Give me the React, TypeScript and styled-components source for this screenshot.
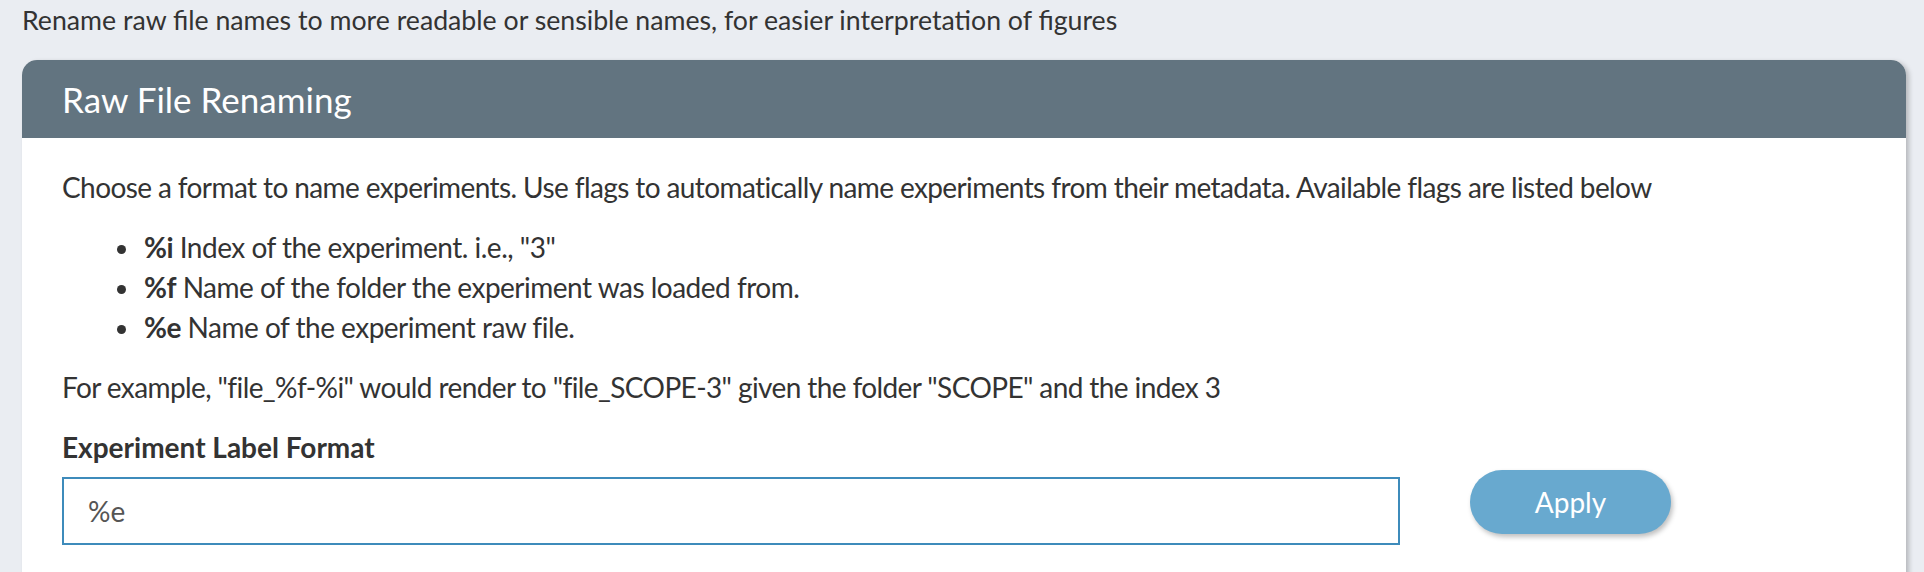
import React, { useState } from 'react';
import styled, { createGlobalStyle } from 'styled-components';

const GlobalStyle = createGlobalStyle`
	html, body {
		margin: 0;
		padding: 0;
		background-color: #eaedf2;
		font-family: Lato, 'Noto Sans', sans-serif;
		color: #333333;
	}
	* {
		box-sizing: border-box;
	}
`;

const Page = styled.div`
	padding: 0 18px 0 22px;
	width: 1924px;
`;

const Intro = styled.p`
	margin: 0;
	padding-top: 2px;
	height: 60px;
	font-size: 26.7px;
	line-height: 36px;
`;

const Panel = styled.section`
	width: 1884px;
	background-color: #ffffff;
	border-radius: 15px 15px 0 0;
	box-shadow: 3px 2px 5px rgba(0, 0, 0, 0.22);
	min-height: 540px;
`;

const PanelHeading = styled.div`
	background-color: #627480;
	border-radius: 15px 15px 0 0;
	padding: 19px 40px;
	height: 78px;
`;

const PanelTitle = styled.h3`
	margin: 0;
	font-size: 35px;
	font-weight: 400;
	line-height: 40px;
	color: #ffffff;
`;

const PanelBody = styled.div`
	padding: 29px 40px;
	font-size: 28px;
	line-height: 40px;
`;

const Text = styled.p`
	margin: 0 0 20px;
	letter-spacing: -0.6px;
`;

const FlagList = styled.ul`
	margin: 0 0 20px;
	padding-left: 80px;
	letter-spacing: -0.5px;
`;

const Flag = styled.li`
	padding-left: 2px;
`;

const FormRow = styled.div`
	display: grid;
	grid-template-columns: 1338px 201px;
	column-gap: 70px;
	align-items: end;
`;

const Field = styled.div`
	display: flex;
	flex-direction: column;
`;

const Label = styled.label`
	font-weight: 700;
	margin-bottom: 10px;
`;

const Input = styled.input`
	height: 68px;
	border: 2px solid #3e8bbb;
	padding: 0 24px;
	font-family: inherit;
	font-size: 28px;
	color: #555555;
	outline: none;
	caret-color: #333333;
`;

const ApplyButton = styled.button`
	height: 64px;
	margin-bottom: 11px;
	border: none;
	border-radius: 32px;
	background-color: #68a9cf;
	color: #ffffff;
	font-family: inherit;
	font-size: 28px;
	box-shadow: 2px 3px 5px rgba(0, 0, 0, 0.25);
	cursor: pointer;
`;

const flags = [
	{ flag: '%i', text: 'Index of the experiment. i.e., "3"' },
	{ flag: '%f', text: 'Name of the folder the experiment was loaded from.' },
	{ flag: '%e', text: 'Name of the experiment raw file.' },
];

function App() {
	const [format, setFormat] = useState<string>('%e');

	return (
		<Page>
			<GlobalStyle />
			<Intro>Rename raw file names to more readable or sensible names, for easier interpretation of figures</Intro>
			<Panel>
				<PanelHeading>
					<PanelTitle>Raw File Renaming</PanelTitle>
				</PanelHeading>
				<PanelBody>
					<Text>
						Choose a format to name experiments. Use flags to automatically name experiments from their
						metadata. Available flags are listed below
					</Text>
					<FlagList>
						{flags.map((el) => (
							<Flag key={el.flag}>
								<b>{el.flag}</b> {el.text}
							</Flag>
						))}
					</FlagList>
					<Text>For example, "file_%f-%i" would render to "file_SCOPE-3" given the folder "SCOPE" and the index 3</Text>
					<FormRow>
						<Field>
							<Label htmlFor="label-format">Experiment Label Format</Label>
							<Input id="label-format" value={format} onChange={(e) => setFormat(e.target.value)} autoFocus />
						</Field>
						<ApplyButton>Apply</ApplyButton>
					</FormRow>
				</PanelBody>
			</Panel>
		</Page>
	);
}

export default App;
